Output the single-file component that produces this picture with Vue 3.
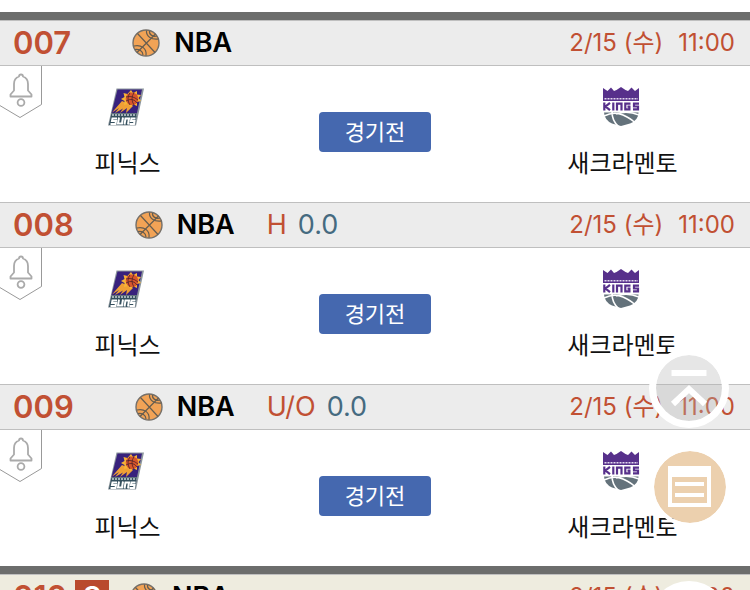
<template>
    <div class="game-list">
        <section v-for="group in groups" :key="group.id" class="group" :class="{ special: group.special }">
            <article v-for="game in group.games" :key="game.no" class="game">
                <header class="game-head">
                    <span class="no">{{ game.no }}</span>
                    <span v-if="game.badge" class="badge">{{ game.badge }}</span>
                    <svg class="ball" viewBox="0 0 28 28" aria-hidden="true">
                        <circle cx="14" cy="14" r="13" fill="#f2a356" stroke="#75706a" stroke-width="1.4" />
                        <g fill="none" stroke="#665d50" stroke-width="1.2">
                            <path d="M5 23.5L23.5 5M5.5 4.5L23 23.5" />
                            <path d="M14.5 1.5C14 7 19 11 26.5 10" />
                            <path d="M17.5 2C17 6 21 8 25 7" />
                            <path d="M2 17C9 15.500 15 19 14 26.500" />
                            <path d="M3 20.500C7 20 11 22 11 26" />
                        </g>
                    </svg>
                    <strong class="league">{{ game.league }}</strong>
                    <span v-if="game.type" class="type">{{ game.type }}</span>
                    <span v-if="game.type" class="point">{{ game.point }}</span>
                    <time class="date"><span>{{ game.date }}</span><span>{{ game.time }}</span></time>
                </header>
                <div class="game-body">
                    <button type="button" class="alarm" aria-label="알림">
                        <svg viewBox="0 0 42 53">
                            <path d="M-1 -1H41.500V38.500L20 51.500L-1 39" fill="#fff" stroke="#999" />
                            <g fill="none" stroke="#aaa" stroke-width="1.800" stroke-linejoin="round">
                                <path d="M10.500 30.500V28.500L14 24.500V18C14 14 16 11.500 19 10.500Q19 8.500 21 8.500T23 10.500C26 11.500 28 14 28 18V24.500L31.500 28.500V30.500Z" />
                                <circle cx="21" cy="36.500" r="3.400" />
                            </g>
                        </svg>
                    </button>
                    <div class="team">
                        <svg class="logo" viewBox="0 0 40 40" aria-hidden="true">
                            <path d="M10.500 1.500H38L30 38.500H2Z" fill="#8c969d" />
                            <path d="M11.500 2.500H36L31 26H5.500Z" fill="#38217c" />
                            <path d="M5.500 26.500H31L29 38H3Z" fill="#35505e" />
                            <path d="M16 14L6 25.500L13 21L9 26L17 21.500L14 26L21 21L20 26L27 19Z" fill="#f0a035" />
                            <path d="M25 3L27 6L31 4L31 7.500L35 8L32.500 11L35 14L31 15L31 19L27.500 17.500L24.500 20L22.500 17L18 18L18.500 14L15 12L18.500 10L17.500 6L21.500 7Z" fill="#f7b336" />
                            <circle cx="26" cy="11.800" r="6.300" fill="#d8562c" />
                            <path d="M20 10Q26 8 32 13M24 5.500Q20 12 24 18M28 5.500Q24 12 28 18M20 14Q27 10 31 16" fill="none" stroke="#51232b" stroke-width=".8" />
                            <path d="M6 28H30.500" stroke="#c9d1d5" stroke-width="1.600" stroke-dasharray="2 1" />
                            <g fill="none" stroke="#fff" stroke-width="2">
                                <path d="M11 31.500H6.500L6 34H10L9.500 37H4.500M13 30.500L12 36.500H16L17 30.500M18.500 37.500L19.500 31.500H23L22 37.500M29.500 31.500H25.500L25 34H28.500L28 37H23.500" />
                            </g>
                        </svg>
                        <span class="team-name">{{ game.home }}</span>
                    </div>
                    <span class="state">{{ game.state }}</span>
                    <div class="team">
                        <svg class="logo" viewBox="0 0 40 40" aria-hidden="true">
                            <path d="M2 14V1L6.500 4L10 .5L13 4L15.500 3L20 0L24.500 3L27 4L30.500 .5L34 4L38 1V14Z" fill="#57308b" />
                            <path d="M3.500 11.800H37" stroke="#e2d8ed" stroke-width="1.600" stroke-dasharray="2 1" />
                            <g fill="none" stroke="#57308b" stroke-width="2.200">
                                <path d="M3.300 15.500V23.500M9 15.800L4.500 19.500L9 23.200M12.300 15.500V23.500M16 23.500V16.600H20.500V23.500M29.500 16.600H24.300V22.400H28.400V19.600H26.500M38 16.600H33V19.500H37V22.400H32" />
                            </g>
                            <path d="M3 25.500H37.500Q37.500 33 29 36.500L20 39L11 36.500Q3.500 33 3 25.500Z" fill="#64727b" />
                            <path d="M3 29Q13 24 22 28T34 36M11 25Q11 34 18 40M15 27Q26 23 38 28" fill="none" stroke="#fff" stroke-width="1.600" />
                        </svg>
                        <span class="team-name">{{ game.away }}</span>
                    </div>
                </div>
            </article>
        </section>

        <nav class="quick">
            <button type="button" class="quick-btn top" aria-label="맨 위로" @click="goTop">
                <svg viewBox="0 0 66 66">
                    <path d="M15.500 18H50.500M17 49L33 34L49 49" fill="none" stroke="#fff" stroke-width="6" />
                </svg>
            </button>
            <button type="button" class="quick-btn memo" aria-label="목록">
                <svg viewBox="0 0 72 72">
                    <g fill="#fff">
                        <path fill-rule="evenodd" d="M14 15H57V56H14ZM18 26V52H53V26Z" />
                        <rect x="21" y="31" width="29" height="4" />
                        <rect x="21" y="42" width="29" height="4" />
                    </g>
                </svg>
            </button>
            <button type="button" class="quick-btn more" aria-label="더보기"></button>
        </nav>
    </div>
</template>

<script setup>
const match = {
    league: 'NBA',
    date: '2/15 (수)',
    time: '11:00',
    home: '피닉스',
    away: '새크라멘토',
    state: '경기전',
}

const groups = [
    {
        id: 1,
        games: [
            { ...match, no: '007' },
            { ...match, no: '008', type: 'H', point: '0.0' },
            { ...match, no: '009', type: 'U/O', point: '0.0' },
        ],
    },
    {
        id: 2,
        special: true,
        games: [{ ...match, no: '010', badge: 'S' }],
    },
]

const goTop = () => {
    window.scrollTo({ top: 0, behavior: 'smooth' })
}
</script>

<style>
    html {
        scrollbar-width: none;
    }
    body {
        margin: 0;
        background: #fff;
    }
</style>

<style scoped>
    .game-list {
        padding-top: 12px;
        font-family: Inter, "Noto Sans CJK KR", sans-serif;
        color: #111;
    }
    .group {
        border-top: 8px solid #6c6d6c;
    }
    .game-head {
        display: flex;
        align-items: center;
        box-sizing: border-box;
        height: 46px;
        padding: 0 15px 0 13px;
        border-top: 1px solid #bfbfbf;
        border-bottom: 1px solid #bfbfbf;
        background: #ececec;
        line-height: 48px;
        white-space: nowrap;
    }
    .special .game-head {
        background: #eeecdf;
    }
    .no {
        margin-right: 61px;
        color: #c15033;
        font-size: 31px;
        font-weight: 600;
    }
    .badge {
        width: 34px;
        height: 34px;
        margin-left: -53px;
        margin-right: 21px;
        background: #b94a2d;
        color: #fff;
        font-size: 28px;
        font-weight: 600;
        line-height: 34px;
        text-align: center;
    }
    .ball {
        flex: none;
        width: 28px;
        height: 28px;
        margin-right: 14px;
    }
    .league {
        margin-right: 32px;
        color: #000;
        font-size: 27px;
        font-weight: 600;
    }
    .type {
        margin-right: 11px;
        color: #c15033;
        font-size: 27px;
    }
    .point {
        color: #456a80;
        font-size: 27px;
    }
    .date {
        display: flex;
        gap: 15px;
        margin-left: auto;
        color: #c15033;
        font-size: 24px;
    }
    .game-body {
        position: relative;
        display: grid;
        grid-template-columns: 34% 1fr 34%;
        padding: 21px 0 22px;
    }
    .alarm {
        position: absolute;
        top: 0;
        left: 0;
        width: 42px;
        height: 53px;
        padding: 0;
        border: 0;
        background: none;
    }
    .alarm svg {
        display: block;
    }
    .team {
        display: flex;
        flex-direction: column;
        align-items: center;
        gap: 17px;
    }
    .logo {
        width: 40px;
        height: 40px;
        margin-right: 4px;
    }
    .team-name {
        font-family: "Noto Sans CJK KR", sans-serif;
        font-size: 24px;
        line-height: 36px;
    }
    .state {
        box-sizing: border-box;
        justify-self: center;
        width: 112px;
        height: 40px;
        margin-top: 25px;
        border-radius: 4px;
        background: #4568af;
        color: #fff;
        font-family: "Noto Sans CJK KR", sans-serif;
        font-size: 22px;
        line-height: 37px;
        text-align: center;
    }
    .quick {
        position: fixed;
        top: 348px;
        right: 20px;
        display: flex;
        flex-direction: column;
        align-items: center;
        gap: 19px;
    }
    .quick-btn {
        box-sizing: border-box;
        width: 80px;
        height: 80px;
        padding: 0;
        border: 7px solid #fff;
        border-radius: 50%;
        background-clip: padding-box;
    }
    .quick-btn svg {
        display: block;
        width: 100%;
    }
    .quick-btn.top {
        background-color: rgba(180, 180, 180, 0.33);
    }
    .quick-btn.memo {
        margin-left: 2px;
        border-width: 4px;
        background-color: #ecd0ae;
    }
    .quick-btn.more {
        margin-top: 35px;
        border: 0;
        background: #fff;
    }
</style>
